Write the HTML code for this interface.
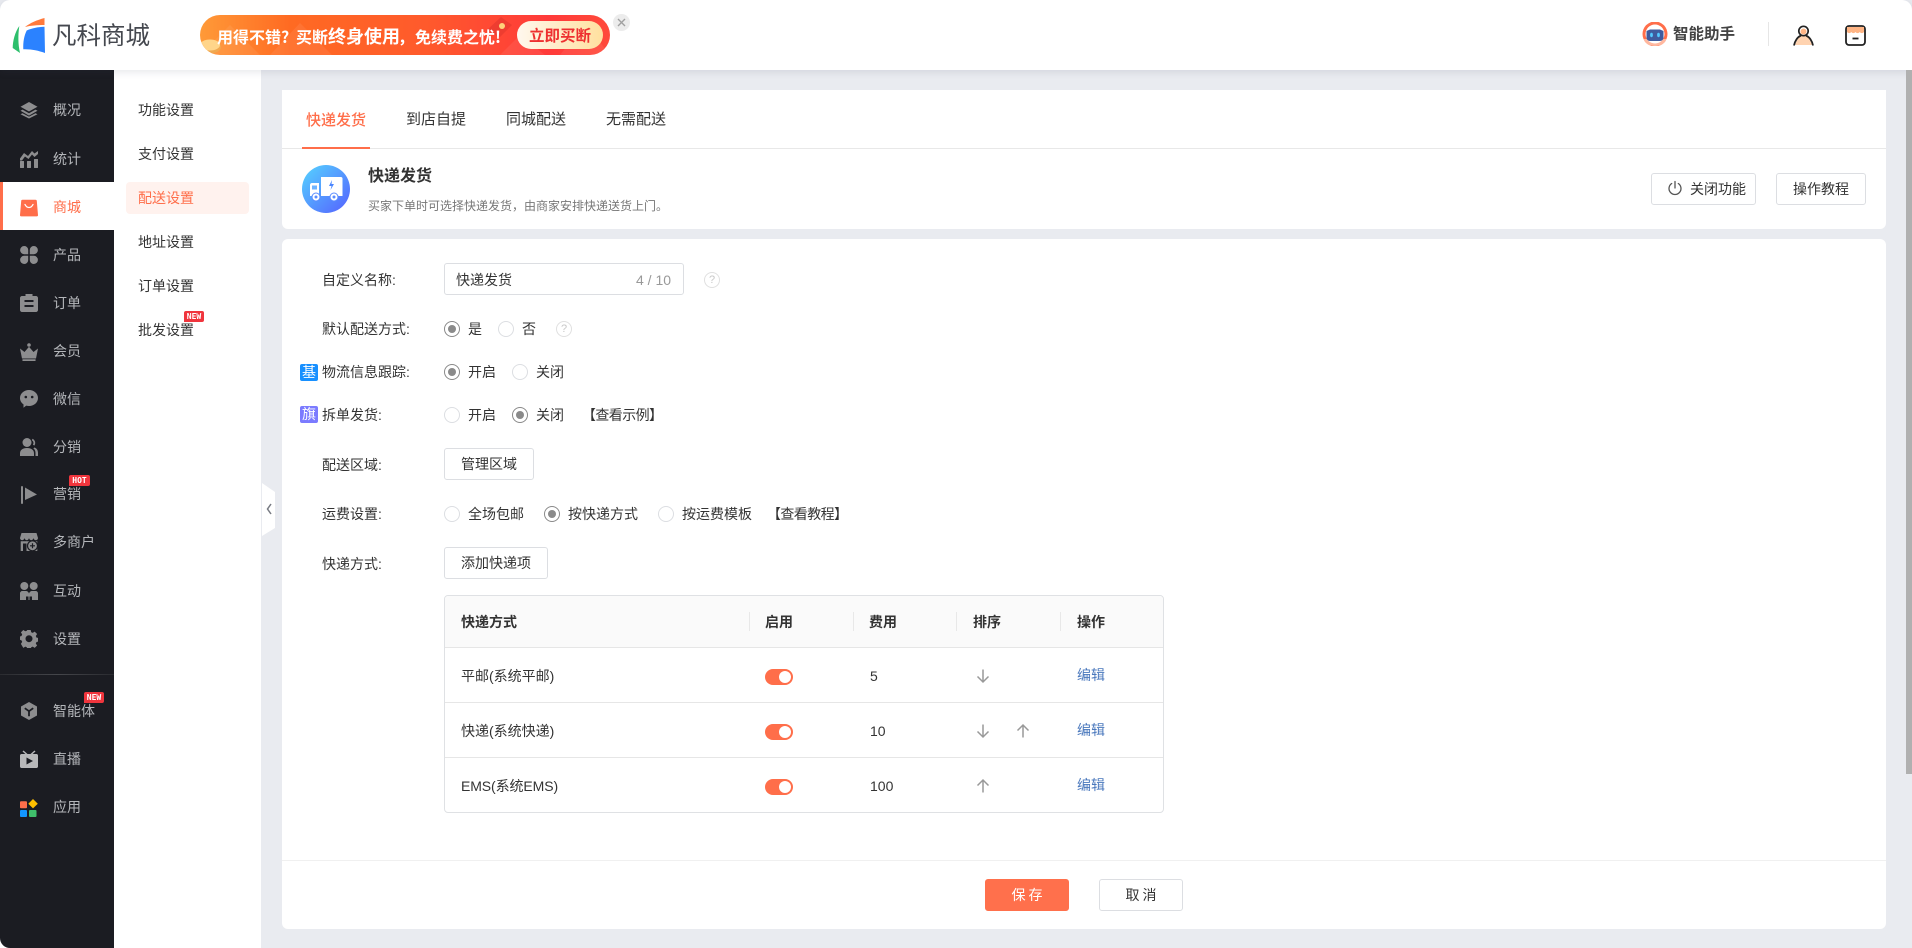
<!DOCTYPE html>
<html lang="zh-CN"><head><meta charset="utf-8"><title>配送设置</title>
<style>
*{box-sizing:border-box}
html,body{margin:0;padding:0;width:1912px;height:948px;overflow:hidden;background:#fff}
body{position:relative;font-family:"Liberation Sans","Noto Sans CJK SC",sans-serif;font-size:14px;color:#333}
.a{position:absolute;white-space:nowrap}
.t{position:absolute;white-space:nowrap;line-height:20px;height:20px}
.box{position:absolute}
.side{color:#b4b6ba}
.lab{color:#333}
.btn{position:absolute;height:32px;border:1px solid #dcdee2;border-radius:3px;background:#fff;text-align:center;line-height:30px;color:#333}
.r{position:absolute;width:16px;height:16px;border:1px solid #dcdee2;border-radius:50%;background:#fff}
.r.on{border-color:#8a8a8a}
.r.on:after{content:"";position:absolute;left:3px;top:3px;width:8px;height:8px;border-radius:50%;background:#8a8a8a}
.q{position:absolute;width:16px;height:16px;border:1px solid #e0e0e0;border-radius:50%;color:#c8c8c8;font-size:11px;line-height:14px;text-align:center}
.badge{position:absolute;background:#f0353d;color:#fff;font-size:8px;font-weight:bold;font-family:"DejaVu Sans Mono","Liberation Mono",monospace;text-align:center;line-height:11px;height:11px;border-radius:2px 2px 2px 0}
.tag{position:absolute;width:18px;height:17px;border-radius:2px;color:#fff;font-size:14px;line-height:17px;text-align:center}
.sw{position:absolute;left:765px;width:28px;height:16px;border-radius:8px;background:#ff6e4a}
.sw:after{content:"";position:absolute;right:2px;top:2px;width:12px;height:12px;border-radius:50%;background:#fff}
.th{position:absolute;top:612px;font-weight:bold;color:#333;line-height:20px}
.sep{position:absolute;top:612px;width:1px;height:19px;background:#e8e8e8}
.hl{position:absolute;left:445px;width:718px;height:1px;background:#e6e6e6}
.i{position:absolute;left:20px;width:18px;height:18px;fill:#8d8d8f}
.bn{position:absolute;white-space:nowrap;color:#fff;font-weight:bold;font-family:"Noto Sans CJK SC",sans-serif}
</style></head><body>

<!-- page background -->
<div class="box" style="left:0;top:0;width:1912px;height:14px;background:#e9ebf0"></div>
<div class="box" style="left:261px;top:70px;width:1651px;height:878px;background:#e9ebf0"></div>
<div class="box" style="left:114px;top:70px;width:147px;height:878px;background:#fff"></div>

<!-- sidebar -->
<div class="box" style="left:0;top:70px;width:114px;height:878px;background:#1b1c22;border-bottom-left-radius:10px"></div>
<div class="box" style="left:0;top:182px;width:114px;height:48px;background:#fff"></div>
<div class="box" style="left:0;top:70px;width:114px;height:112px;background:#1b1c22;border-bottom-right-radius:6px"></div>
<div class="box" style="left:0;top:230px;width:114px;height:20px;background:#1b1c22;border-top-right-radius:6px"></div>
<div class="box" style="left:0;top:182px;width:3px;height:48px;background:#ff6e4a"></div>
<div class="box" style="left:0;top:674px;width:114px;height:1px;background:linear-gradient(90deg,#2a2b30,#45464b 50%,#2a2b30)"></div>

<!-- sidebar icons -->
<svg class="i" style="top:101px" viewBox="0 0 18 18"><path d="M9 1 17.500 5.800 9 10.500.5 5.800Z"/><path d="M2.500 8.600.5 9.800 9 14.600l8.500-4.800-2-1.200L9 12.200Z"/><path d="M2.500 12.200.5 13.300 9 17.500l8.500-4.200-2-1.100L9 15.600Z"/></svg>
<svg class="i" style="top:150px" viewBox="0 0 18 18"><rect x="0" y="11" width="4" height="7" rx=".5"/><rect x="7" y="11" width="4" height="7" rx=".5"/><rect x="14" y="9" width="4" height="9" rx=".5"/><path d="M0 8.500 4 3l4 3 4-5 2.500 2.500L18 1v3l-3.500 3L12 4.500 8.500 9 5 6.500 2 10.500H0Z"/></svg>
<svg class="i" style="top:199px;fill:#ff6e4a" viewBox="0 0 18 18"><path d="M2.500.8h13c.7 0 1.200.4 1.300 1.100l1.200 14.200c.1.800-.5 1.300-1.200 1.300H1.200C.5 17.400-.1 16.900 0 16.100L1.200 1.900C1.300 1.200 1.800.8 2.500.8Z"/><path d="M5 5.500c1 2 2.500 3 4 3s3-1 4-3" fill="none" stroke="#fff" stroke-width="1.300" stroke-linecap="round"/></svg>
<svg class="i" style="top:246px" viewBox="0 0 18 18"><path d="M4.200 0a4 4 0 0 1 4 4.200v4H4.200a4.100 4.100 0 0 1 0-8.200Z"/><path d="M13.800 0a4.100 4.100 0 0 1 0 8.200h-4v-4a4 4 0 0 1 4-4.200Z"/><path d="M4.200 9.800h4V14a4 4 0 0 1-4 4 4.100 4.100 0 0 1 0-8.200Z"/><path d="M9.800 9.800h4a4.100 4.100 0 0 1 0 8.200 4 4 0 0 1-4-4Z"/></svg>
<svg class="i" style="top:294px" viewBox="0 0 18 18"><path d="M5.500 0h7v2h3.500c1.100 0 2 .9 2 2v12c0 1.100-.9 2-2 2H2c-1.100 0-2-.9-2-2V4c0-1.100.9-2 2-2h3.500Z"/><rect x="4.500" y="6" width="9" height="2" fill="#1b1c22"/><rect x="4.500" y="11" width="9" height="2" fill="#1b1c22"/></svg>
<svg class="i" style="top:343px" viewBox="0 0 18 18"><circle cx="9" cy="2" r="1.800"/><path d="M0 5.500 4.500 9 9 3.800 13.500 9 18 5.500 16 15.500H2Z"/><rect x="2.400" y="16.200" width="13.200" height="1.800" rx=".5"/></svg>
<svg class="i" style="top:390px" viewBox="0 0 18 18"><path d="M9 0c5 0 9 3.500 9 8s-4 8-9 8c-1 0-2-.1-2.800-.4L3.500 17.800v-3.400C1.300 12.900 0 10.600 0 8c0-4.500 4-8 9-8Z"/><circle cx="5.800" cy="7" r="1.300" fill="#1b1c22"/><circle cx="12.200" cy="7" r="1.300" fill="#1b1c22"/></svg>
<svg class="i" style="top:438px" viewBox="0 0 18 18"><circle cx="7" cy="4.500" r="4.500"/><path d="M0 18v-2.500C0 12 2.500 10 7 10s7 2 7 5.500V18Z"/><path d="M12.500.8a4.500 4.500 0 0 1 1.800 6.800l-1.400-1a3 3 0 0 0-1-4.400ZM14.500 9.500c2.300.8 3.500 2.800 3.500 5.500v3h-2.500v-3c0-2-.6-3.500-2.200-4.600Z"/></svg>
<svg class="i" style="top:486px" viewBox="0 0 18 18"><rect x="1" y="0" width="2" height="18" rx="1"/><path d="M5 1.500 17 8.500 5 14Z"/></svg>
<svg class="i" style="top:533px" viewBox="0 0 18 18"><path d="M1.500 0h15L18 5c0 1.300-1 2.200-2.200 2.200S13.700 6.300 13.500 5c-.2 1.300-1.300 2.200-2.300 2.200S9.200 6.300 9 5c-.2 1.300-1.200 2.200-2.200 2.200S4.700 6.300 4.500 5c-.2 1.300-1.200 2.200-2.300 2.200S0 6.300 0 5Z"/><path d="M.7 8.200h16.600V18H.7Z"/><circle cx="12.500" cy="12.800" r="5" fill="#8d8d8f" stroke="#1b1c22" stroke-width="1.200"/><path d="M10 12.800h5M12.500 10.300v5" stroke="#1b1c22" stroke-width="1.200"/><rect x="3" y="10.500" width="3.500" height="7.500" fill="#1b1c22"/></svg>
<svg class="i" style="top:582px" viewBox="0 0 18 18"><circle cx="4.300" cy="4" r="4"/><circle cx="13.700" cy="4" r="4"/><path d="M0 18v-6.500C0 10 1 9 2.500 9H6c1.500 0 2.500 1 3 2.500C9.500 10 10.500 9 12 9h3.500c1.500 0 2.500 1 2.500 2.500V18h-6v-3.500H9.500V18h-1v-3.500H6V18Z"/></svg>
<svg class="i" style="top:630px" viewBox="0 0 18 18"><path fill-rule="evenodd" d="M7.300 0h3.400l.5 2.300 1.500.6 2-1.300 2.400 2.400-1.300 2 .7 1.600 2.300.5v3.400l-2.300.5-.7 1.500 1.300 2-2.400 2.400-2-1.300-1.500.6-.5 2.300H7.300l-.5-2.300-1.500-.6-2 1.300L.9 13.900l1.300-2-.7-1.500L0 9.900V6.500l1.500-.5.7-1.600-1.300-2L3.300 0l2 1.300 1.500-.6ZM9 5.200a3.500 3.500 0 1 0 0 7 3.500 3.500 0 0 0 0-7Z"/></svg>
<svg class="i" style="top:702px" viewBox="0 0 18 18"><path d="M9 0 17 4.500v9L9 18 1 13.500v-9Z"/><path d="M4.800 6.200 9 9.200l4.200-3M9 9.200v5" fill="none" stroke="#1b1c22" stroke-width="1.800"/></svg>
<svg class="i" style="top:750px;fill:#b8b8ba" viewBox="0 0 18 18"><path d="M3.500.5 7.500 4h3l4-3.500 1 1L12.600 4H16.500c.8 0 1.500.7 1.500 1.500V16.500c0 .8-.7 1.500-1.500 1.500h-15C.7 18 0 17.300 0 16.500V5.500C0 4.700.7 4 1.500 4H5.400L2.500 1.500Z"/><path d="M6.500 7.500 13 11l-6.500 3.500Z" fill="#1b1c22"/></svg>
<svg class="i" style="top:799px" viewBox="0 0 18 18"><rect x="0" y="2.300" width="7" height="7" rx="1" fill="#ff6e4a"/><rect x="0" y="11" width="7" height="7" rx="1" fill="#1296ff"/><rect x="9" y="11" width="7.500" height="7" rx="1" fill="#3fbf6b"/><path d="M13 0 17.800 4.700 13 9.400 8.300 4.700Z" fill="#ffbf00"/></svg>

<!-- sidebar text -->
<span class="t side" style="left:53px;top:100px">概况</span>
<span class="t side" style="left:53px;top:149px">统计</span>
<span class="t" style="left:53px;top:197px;color:#ff6e4a">商城</span>
<span class="t side" style="left:53px;top:245px">产品</span>
<span class="t side" style="left:53px;top:293px">订单</span>
<span class="t side" style="left:53px;top:341px">会员</span>
<span class="t side" style="left:53px;top:389px">微信</span>
<span class="t side" style="left:53px;top:437px">分销</span>
<span class="t side" style="left:53px;top:484px">营销</span>
<span class="t side" style="left:53px;top:532px">多商户</span>
<span class="t side" style="left:53px;top:581px">互动</span>
<span class="t side" style="left:53px;top:629px">设置</span>
<span class="t side" style="left:53px;top:701px">智能体</span>
<span class="t side" style="left:53px;top:749px">直播</span>
<span class="t side" style="left:53px;top:797px">应用</span>
<span class="badge" style="left:69px;top:475px;width:21px">HOT</span>
<span class="badge" style="left:84px;top:692px;width:20px">NEW</span>

<!-- submenu -->
<div class="box" style="left:126px;top:182px;width:123px;height:32px;border-radius:4px;background:#fff2ee"></div>
<span class="t" style="left:138px;top:100px">功能设置</span>
<span class="t" style="left:138px;top:144px">支付设置</span>
<span class="t" style="left:138px;top:188px;color:#ff6e4a">配送设置</span>
<span class="t" style="left:138px;top:232px">地址设置</span>
<span class="t" style="left:138px;top:276px">订单设置</span>
<span class="t" style="left:138px;top:320px">批发设置</span>
<span class="badge" style="left:184px;top:311px;width:20px">NEW</span>

<!-- collapse handle -->
<svg class="a" style="left:262px;top:483px" width="14" height="54" viewBox="0 0 14 54"><path d="M0 0 13 9V45L0 53Z" fill="#fff"/><path d="M9 21 5.500 26 9 31" fill="none" stroke="#777a82" stroke-width="1.500"/></svg>

<!-- header -->
<div class="box" style="left:0;top:0;width:1912px;height:70px;background:#fff;border-radius:10px 10px 0 0;box-shadow:0 2px 8px rgba(60,70,90,.13)"></div>

<!-- logo -->
<svg class="a" style="left:11px;top:17px" width="36" height="38" viewBox="0 0 36 38"><path d="M8.300 9C4 15 1.700 24 1.700 31L9 36C7 27 7 18 8.300 9Z" fill="#2dbf6c"/><path d="M14 10C19 6 26 3 33.500 1V8C26 8 20 8.500 14 10Z" fill="#ff7a3d"/><path d="M15.700 13.500C21 11 27 10 33.500 9.700L34 36C27 33.500 20 32 12.300 32.300 12 25 13 19 15.700 13.500Z" fill="#2b82ff"/></svg>
<span class="t" style="left:52px;top:21px;height:28px;line-height:28px;font-size:24.500px;font-weight:400;color:#45484f;font-family:'Noto Sans CJK SC',sans-serif">凡科商城</span>

<!-- banner -->
<div class="box" style="left:200px;top:15px;width:410px;height:40px;border-radius:20px;background:linear-gradient(90deg,#ff9a38 0,#ff6a22 22%,#ff5a2c 55%,#ff3a3a 85%,#ff4a3a 100%);overflow:hidden">
<svg width="410" height="40" style="position:absolute;left:0;top:0"><path d="M0 40 30 10 60 40ZM70 40 100 8 132 40ZM300 40 320 20 345 40ZM360 40 385 8 410 40Z" fill="#fff" opacity=".07"/></svg>
<svg width="24" height="18" style="position:absolute;left:0;top:22px"><ellipse cx="10" cy="10" rx="11" ry="6.500" fill="#f0a850"/><ellipse cx="10" cy="8" rx="10" ry="5.500" fill="#ffd58a"/></svg>
</div>
<svg class="a" style="left:486px;top:17px" width="26" height="20" viewBox="0 0 26 20"><path d="M15 0 26 8 14 20 0 14Z" fill="#ee3d30"/><circle cx="16" cy="9" r="3" fill="#ffd27a"/></svg>
<span class="bn" style="left:217px;top:25px;font-size:16px;line-height:22px">用得不错?</span>
<span class="bn" style="left:296px;top:25px;font-size:16px;line-height:22px">买断</span>
<span class="bn" style="left:328px;top:24px;font-size:18px;line-height:24px">终身使用</span>
<span class="bn" style="left:398px;top:25px;font-size:16px;line-height:22px">&#xFF0C;</span>
<span class="bn" style="left:415px;top:25px;font-size:16px;line-height:22px">免续费之忧!</span>
<div class="box bn" style="left:517px;top:21px;width:86px;height:28px;border-radius:14px;background:linear-gradient(90deg,#fff8ee,#ffe09e);color:#ee3030;font-size:15.500px;line-height:28px;text-align:center">立即买断</div>
<div class="box" style="left:613px;top:14px;width:17px;height:17px;border-radius:50%;background:#ececec"></div>
<svg class="a" style="left:616px;top:17px" width="11" height="11"><path d="M2 2 9 9M9 2 2 9" stroke="#a0a0a0" stroke-width="1.400"/></svg>

<!-- header right -->
<svg class="a" style="left:1642px;top:22px" width="26" height="24" viewBox="0 0 26 24"><circle cx="13" cy="12" r="12.500" fill="#ff6e4a"/><path d="M1.500 17C3 22 8 24 13 24s10-2 11.500-7Z" fill="#ffb89f"/><circle cx="13" cy="12" r="9.500" fill="#fff"/><path d="M4.500 9 8 7.500h10L21.500 9V15.500c0 2-1.500 3.500-3.500 3.500H8c-2 0-3.500-1.500-3.500-3.500Z" fill="#3f5b9e"/><ellipse cx="9.500" cy="13" rx="1.400" ry="2.200" fill="#52c8ff"/><ellipse cx="16.500" cy="13" rx="1.400" ry="2.200" fill="#52c8ff"/></svg>
<span class="t" style="left:1673px;top:25px;font-weight:bold;font-size:15.500px;color:#444">智能助手</span>
<div class="box" style="left:1768px;top:22px;width:1px;height:24px;background:#e6e6e6"></div>
<svg class="a" style="left:1793px;top:25px" width="21" height="21" viewBox="0 0 21 21"><path d="M10.500 9C8 9 4 14 2 20h17c-2-6-6-11-8.500-11Z" fill="#ffd3b0"/><circle cx="10.500" cy="6" r="4.700" fill="#fff" stroke="#222" stroke-width="1.700"/><circle cx="10.500" cy="6.500" r="3" fill="#ffb585"/><path d="M1 20.500c.8-4.500 3.500-8.500 7-10M20 20.500c-.8-4.500-3.500-8.500-7-10" fill="none" stroke="#222" stroke-width="1.800"/></svg>
<svg class="a" style="left:1845px;top:25px" width="21" height="21" viewBox="0 0 21 21"><rect x="1" y="1" width="19" height="19" rx="3" fill="#fff" stroke="#222" stroke-width="1.800"/><path d="M2 2h17v5c-1.500 1.500-3 1.500-4.200 0-1.500 1.500-3 1.500-4.300 0-1.300 1.500-2.800 1.500-4.300 0C5 8.500 3.500 8.500 2 7Z" fill="#ffb585"/><path d="M7.500 13.500h6" stroke="#222" stroke-width="1.800"/></svg>

<!-- card 1 -->
<div class="box" style="left:282px;top:90px;width:1604px;height:139px;background:#fff;border-radius:0 0 6px 6px"></div>
<div class="box" style="left:282px;top:148px;width:1604px;height:1px;background:#e8e8e8"></div>
<div class="box" style="left:302px;top:147px;width:68px;height:2px;background:#ff6e4a"></div>
<span class="t" style="left:306px;top:110px;font-size:15px;color:#ff6e4a;font-weight:500;font-family:'Noto Sans CJK SC',sans-serif">快递发货</span>
<span class="t" style="left:406px;top:110px;font-size:15px">到店自提</span>
<span class="t" style="left:506px;top:110px;font-size:15px">同城配送</span>
<span class="t" style="left:606px;top:110px;font-size:15px">无需配送</span>

<svg class="a" style="left:302px;top:165px" width="48" height="48" viewBox="0 0 48 48"><defs><linearGradient id="g" x1="0" y1="0" x2="1" y2="1"><stop offset="0" stop-color="#55d4ff"/><stop offset="1" stop-color="#5560ff"/></linearGradient></defs><circle cx="24" cy="24" r="24" fill="url(#g)"/><path d="M19 12h20c.8 0 1.500.7 1.500 1.500V31H19Z" fill="#fff"/><path d="M8 20c0-1 .7-2 2-2h7v13H8Z" fill="#fff"/><path d="M10 20.500h5v4h-5Z" fill="#6fb4ff"/><path d="M30 15l-3 6h2.500l-1 4 3.500-6H29.500Z" fill="#4a86ff"/><circle cx="14" cy="32" r="4" fill="#fff" stroke="#5a8cff"/><circle cx="14" cy="32" r="1.500" fill="#5a8cff"/><circle cx="32" cy="32" r="4" fill="#fff" stroke="#5a8cff"/><circle cx="32" cy="32" r="1.500" fill="#5a8cff"/></svg>
<span class="t" style="left:368px;top:167px;font-size:16px;font-weight:bold;color:#333">快递发货</span>
<span class="t" style="left:368px;top:196px;font-size:12px;color:#777">买家下单时可选择快递发货&#xFF0C;由商家安排快递送货上门。</span>

<div class="btn" style="left:1651px;top:173px;width:105px"></div>
<svg class="a" style="left:1667px;top:180px" width="16" height="16" viewBox="0 0 16 16"><path d="M4.700 3.500a6 6 0 1 0 6.600 0M8 1.500V8" fill="none" stroke="#555" stroke-width="1.300" stroke-linecap="round"/></svg>
<span class="t" style="left:1690px;top:179px">关闭功能</span>
<div class="btn" style="left:1776px;top:173px;width:90px">操作教程</div>

<!-- card 2 -->
<div class="box" style="left:282px;top:239px;width:1604px;height:690px;background:#fff;border-radius:6px"></div>
<div class="box" style="left:282px;top:860px;width:1604px;height:1px;background:#f0f0f0"></div>

<!-- form -->
<span class="t" style="left:322px;top:270px">自定义名称:</span>
<div class="box" style="left:444px;top:263px;width:240px;height:32px;border:1px solid #dcdee2;border-radius:3px"></div>
<span class="t" style="left:456px;top:270px">快递发货</span>
<span class="t" style="left:636px;top:270px;color:#999">4 / 10</span>
<span class="q" style="left:704px;top:272px">?</span>

<span class="t" style="left:322px;top:319px">默认配送方式:</span>
<span class="r on" style="left:444px;top:321px"></span><span class="t" style="left:468px;top:319px">是</span>
<span class="r" style="left:498px;top:321px"></span><span class="t" style="left:522px;top:319px">否</span>
<span class="q" style="left:556px;top:321px">?</span>

<span class="tag" style="left:300px;top:364px;background:#1890ff">基</span>
<span class="t" style="left:322px;top:362px">物流信息跟踪:</span>
<span class="r on" style="left:444px;top:364px"></span><span class="t" style="left:468px;top:362px">开启</span>
<span class="r" style="left:512px;top:364px"></span><span class="t" style="left:536px;top:362px">关闭</span>

<span class="tag" style="left:300px;top:406px;background:#7b7bff">旗</span>
<span class="t" style="left:322px;top:405px">拆单发货:</span>
<span class="r" style="left:444px;top:407px"></span><span class="t" style="left:468px;top:405px">开启</span>
<span class="r on" style="left:512px;top:407px"></span><span class="t" style="left:536px;top:405px">关闭</span>
<span class="t" style="left:582px;top:405px;letter-spacing:-.6px">【查看示例】</span>

<span class="t" style="left:322px;top:455px">配送区域:</span>
<div class="btn" style="left:444px;top:448px;width:90px">管理区域</div>

<span class="t" style="left:322px;top:504px">运费设置:</span>
<span class="r" style="left:444px;top:506px"></span><span class="t" style="left:468px;top:504px">全场包邮</span>
<span class="r on" style="left:544px;top:506px"></span><span class="t" style="left:568px;top:504px">按快递方式</span>
<span class="r" style="left:658px;top:506px"></span><span class="t" style="left:682px;top:504px">按运费模板</span>
<span class="t" style="left:767px;top:504px;letter-spacing:-.6px">【查看教程】</span>

<span class="t" style="left:322px;top:554px">快递方式:</span>
<div class="btn" style="left:444px;top:547px;width:104px">添加快递项</div>

<!-- table -->
<div class="box" style="left:444px;top:595px;width:720px;height:218px;border:1px solid #dfe1e4;border-radius:4px;background:#fff;overflow:hidden"><div style="height:52px;background:#fafafa"></div></div>
<div class="hl" style="top:647px"></div><div class="hl" style="top:702px"></div><div class="hl" style="top:757px"></div>
<span class="sep" style="left:749px"></span><span class="sep" style="left:853px"></span><span class="sep" style="left:956px"></span><span class="sep" style="left:1060px"></span>
<span class="th" style="left:461px">快递方式</span><span class="th" style="left:765px">启用</span><span class="th" style="left:869px">费用</span><span class="th" style="left:973px">排序</span><span class="th" style="left:1077px">操作</span>

<span class="t" style="left:461px;top:666px">平邮(系统平邮)</span>
<span class="t" style="left:461px;top:721px">快递(系统快递)</span>
<span class="t" style="left:461px;top:776px;letter-spacing:-.1px">EMS(系统EMS)</span>
<span class="sw" style="top:669px"></span><span class="sw" style="top:724px"></span><span class="sw" style="top:779px"></span>
<span class="t" style="left:870px;top:666px">5</span><span class="t" style="left:870px;top:721px">10</span><span class="t" style="left:870px;top:776px">100</span>
<span class="t" style="left:1077px;top:665px;color:#4a78bd">编辑</span><span class="t" style="left:1077px;top:720px;color:#4a78bd">编辑</span><span class="t" style="left:1077px;top:775px;color:#4a78bd">编辑</span>
<svg class="a" style="left:976px;top:668px" width="14" height="16" viewBox="0 0 14 16"><path d="M7 1.500V14M1.500 8.500 7 14l5.500-5.500" fill="none" stroke="#999" stroke-width="1.500"/></svg>
<svg class="a" style="left:976px;top:723px" width="14" height="16" viewBox="0 0 14 16"><path d="M7 1.500V14M1.500 8.500 7 14l5.500-5.500" fill="none" stroke="#999" stroke-width="1.500"/></svg>
<svg class="a" style="left:1016px;top:723px" width="14" height="16" viewBox="0 0 14 16"><path d="M7 14.500V2M1.500 7.500 7 2l5.500 5.500" fill="none" stroke="#999" stroke-width="1.500"/></svg>
<svg class="a" style="left:976px;top:778px" width="14" height="16" viewBox="0 0 14 16"><path d="M7 14.500V2M1.500 7.500 7 2l5.500 5.500" fill="none" stroke="#999" stroke-width="1.500"/></svg>

<!-- footer buttons -->
<div class="btn" style="left:985px;top:879px;width:84px;background:#ff704c;border-color:#ff704c;color:#fff;letter-spacing:3px;padding-left:3px">保存</div>
<div class="btn" style="left:1099px;top:879px;width:84px;letter-spacing:3px;padding-left:3px">取消</div>

<!-- scrollbar -->
<div class="box" style="left:1906px;top:70px;width:6px;height:704px;background:#b0b0b0"></div>
</body></html>
